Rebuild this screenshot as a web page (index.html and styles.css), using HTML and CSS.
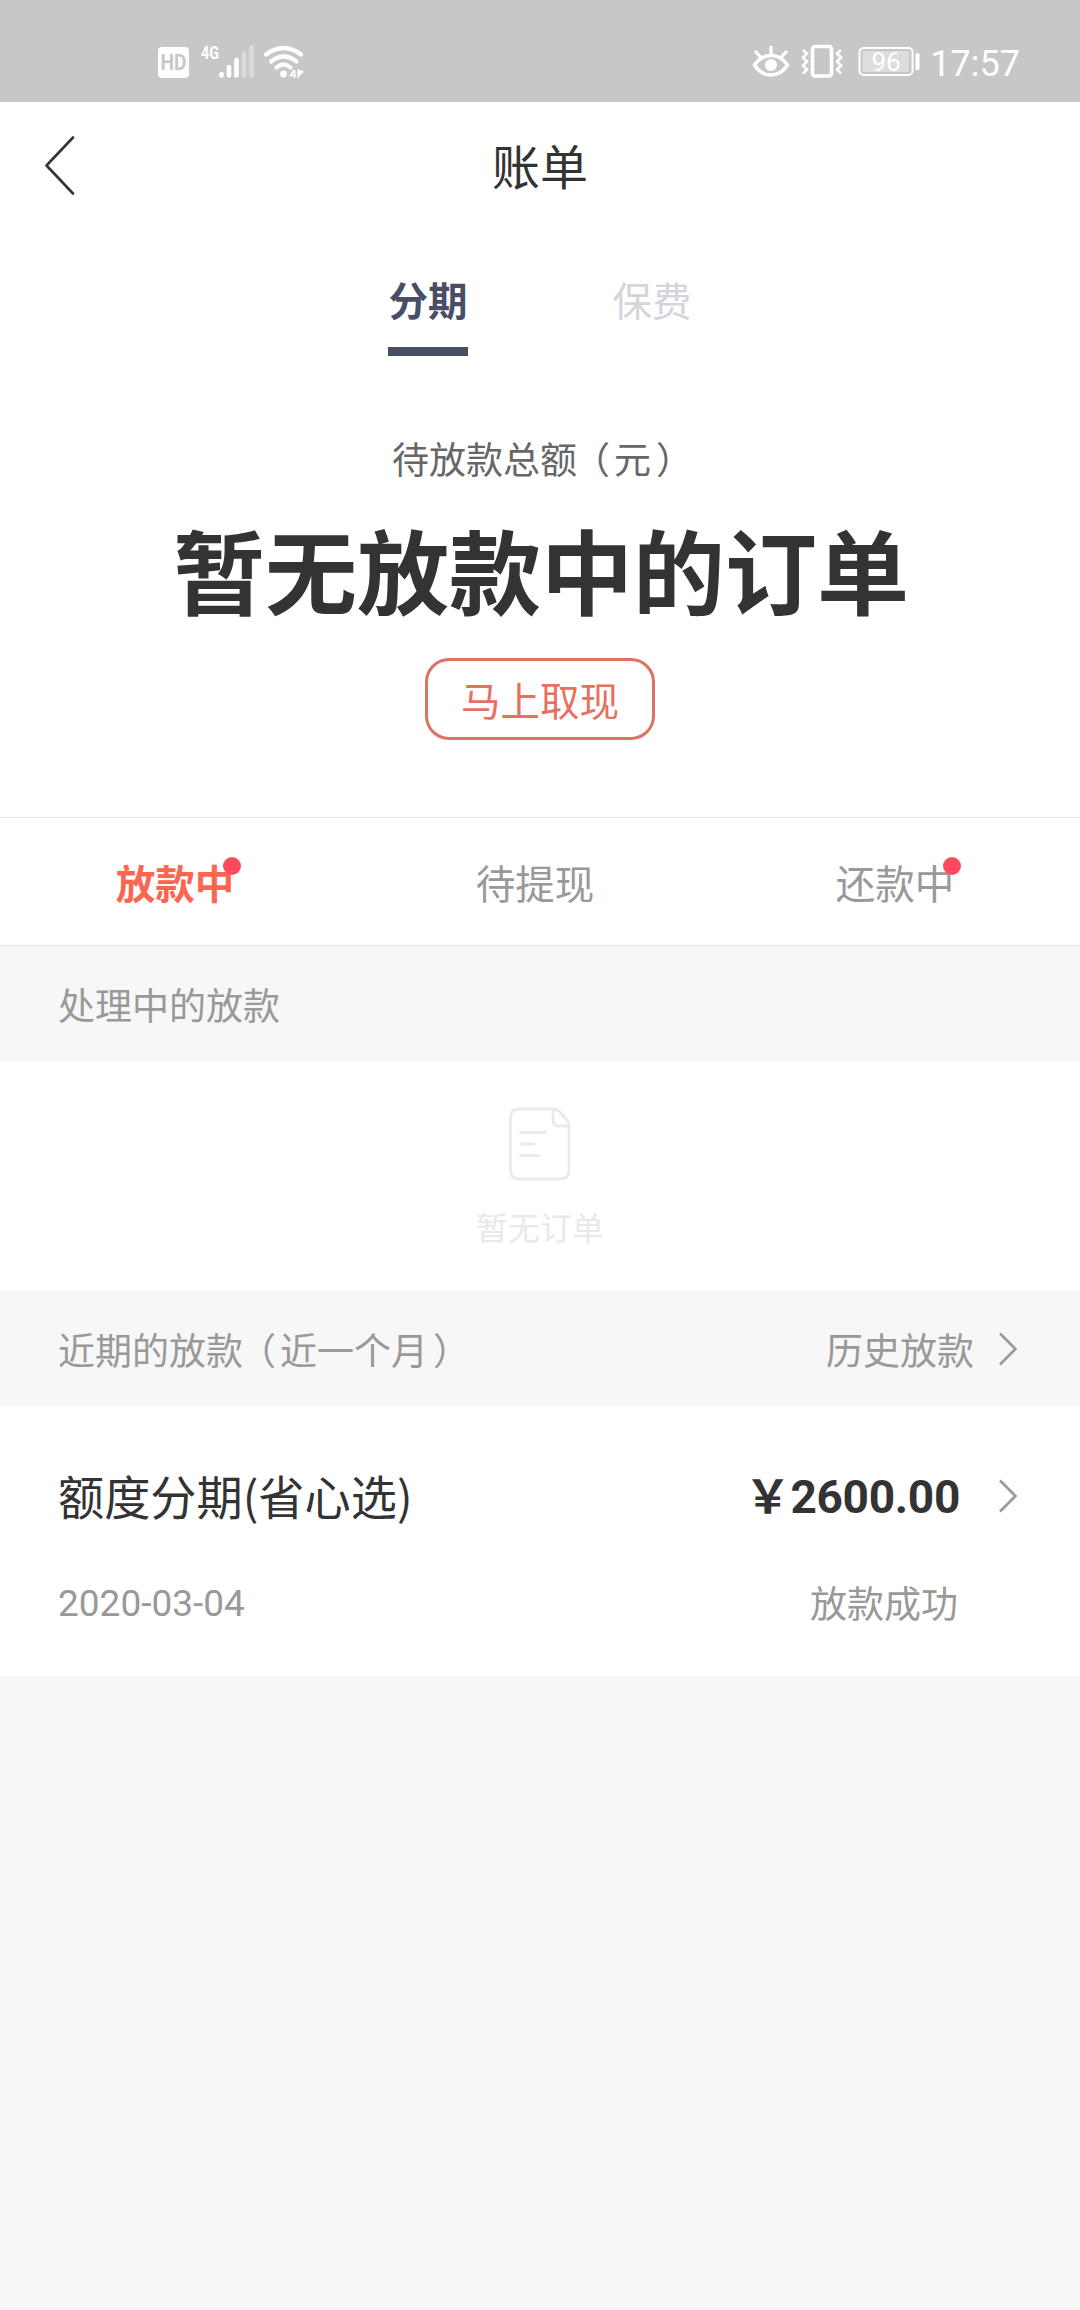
FILE: index.html
```html
<!DOCTYPE html>
<html lang="zh-CN">
<head>
<meta charset="utf-8">
<title>账单</title>
<link rel="stylesheet" href="styles.css">
</head>
<body>
<div class="status">
  <svg class="status-left" width="160" height="50" viewBox="150 36 160 50" fill="none" stroke="#fff">
    <rect x="158" y="47" width="31" height="31" rx="4" fill="#fff" stroke="none"/>
    <text class="hd" x="173.5" y="70" text-anchor="middle" textLength="26" lengthAdjust="spacingAndGlyphs">HD</text>
    <text class="net" x="201" y="59" textLength="18" lengthAdjust="spacingAndGlyphs">4G</text>
    <g stroke-width="4.6" stroke-linecap="round">
      <path d="M221.500 74v1.500M229 67v8.500M236.500 60v15.500"/>
      <path d="M244 53v22.500M251.500 47v28.500" opacity=".35"/>
    </g>
    <g stroke-width="4.200" stroke-linecap="round">
      <path d="M266 54.500Q283.500 41.500 301 54.500"/>
      <path d="M271 61.500Q283.500 51.500 296.500 61.500"/>
      <path d="M276.500 67.500Q283.500 61.500 290.500 67.500"/>
    </g>
    <circle cx="283.500" cy="74" r="3.400" fill="#fff" stroke="none"/>
    <path d="M294.500 70v8M294 70l-3.500 5.500h5.500" stroke-width="1.700"/>
    <path d="M298 69.500v9M298.500 70l4.500 2-4.500 4z" stroke-width="1.200" fill="#fff"/>
  </svg>
  <div class="status-right">
    <svg width="170" height="50" viewBox="752 36 170 50" fill="none" stroke="#fff">
      <path d="M755.500 65Q762 55.500 772 55.500T788.500 65Q782 75 772 75T755.500 65Z" stroke-width="3.600"/>
      <circle cx="772" cy="65" r="6" fill="#fff" stroke="none"/>
      <path d="M772 47.500v6M757 52l4.500 5M787 52l-4.500 5" stroke-width="3.300" stroke-linecap="round"/>
      <rect x="813.500" y="46.500" width="19" height="29.500" rx="2.500" stroke-width="3.600"/>
      <path d="M804 50l4 3.500-4 4 4 4-4 4 4 4-4 4M842 50l-4 3.500 4 4-4 4 4 4-4 4 4 4" stroke-width="2.600"/>
      <rect x="860.500" y="48" width="53" height="27" rx="4" stroke-width="2"/>
      <rect x="863.500" y="51" width="46.500" height="21" fill="#fff" opacity=".4" stroke="none"/>
      <text class="charge" x="887" y="71" text-anchor="middle">96</text>
      <rect x="916.500" y="53" width="4" height="17" rx="1.500" fill="#fff" stroke="none"/>
    </svg>
    <span class="clock">17:57</span>
  </div>
</div>

<header class="nav">
  <svg class="back" width="32" height="60" viewBox="0 0 32 60" fill="none" stroke="#333" stroke-width="2.600" stroke-linecap="round" stroke-linejoin="round"><path d="M29 2.500L2.500 30.500 29 58.500"/></svg>
  <h1 class="title">账单</h1>
</header>

<nav class="kinds">
  <a class="kind kind-on">分期</a>
  <a class="kind">保费</a>
</nav>

<section class="summary">
  <p class="caption">待放款总额<span class="open">（</span>元<span class="close">）</span></p>
  <p class="headline">暂无放款中的订单</p>
  <button class="cash">马上取现</button>
</section>

<nav class="tabs">
  <a class="tab tab-on"><span class="tab-label">放款中<i class="dot"></i></span></a>
  <a class="tab"><span class="tab-label">待提现</span></a>
  <a class="tab"><span class="tab-label">还款中<i class="dot"></i></span></a>
</nav>

<div class="section">处理中的放款</div>
<div class="empty">
  <svg width="62" height="74" viewBox="0 0 62 74" fill="none" stroke="#ebebeb" stroke-width="2.800" stroke-linejoin="round"><path d="M9 2H44Q48 2 51 5L57 12Q60 15 60 19V63Q60 72 51 72H10Q1.500 72 1.500 63V10.500Q1.500 2 9 2Z"/><path d="M44 2.500V13Q44 19 50 19H59M10.500 25.500H38M10.500 37H26M10.500 48.500H30.500"/></svg>
  <p class="empty-text">暂无订单</p>
</div>
<div class="section">
  <span>近期的放款<span class="open">（</span>近一个月<span class="close">）</span></span>
  <a class="history">历史放款<svg class="arrow" width="20" height="36" viewBox="0 0 20 36"><path d="M2 2.500L17.500 18 2 33.500"/></svg></a>
</div>
<div class="loan">
  <div class="row">
    <span class="name">额度分期(省心选)</span>
    <span class="amount">￥2600.00</span>
    <svg class="arrow" width="20" height="36" viewBox="0 0 20 36"><path d="M2 2.500L17.500 18 2 33.500"/></svg>
  </div>
  <div class="row row-sub">
    <span class="date">2020-03-04</span>
    <span class="state">放款成功</span>
  </div>
</div>
</body>
</html>
```

FILE: styles.css
```css
* { box-sizing: border-box; margin: 0; padding: 0; }
body {
  background: #f7f7f7;
  color: #333;
  font-family: "Noto Sans CJK SC", sans-serif;
  height: 2310px;
  overflow: hidden;
  white-space: nowrap;
}
svg { display: block; flex: none; }

.status {
  height: 102px;
  background: #c7c7c7;
  display: flex;
  justify-content: space-between;
  padding: 36px 60px 0 150px;
  font-family: Roboto, sans-serif;
  color: #fff;
}
.status-right { display: flex; gap: 9px; }
.hd { font: 700 22px Roboto, sans-serif; fill: #c7c7c7; stroke: none; }
.net { font: 700 19px Roboto, sans-serif; fill: #fff; stroke: none; }
.charge { font: 400 26px Roboto, sans-serif; fill: #fff; stroke: none; }
.clock { font-size: 36px; line-height: 56px; }

.nav {
  height: 128px;
  background: #fff;
  display: grid;
  grid-template-columns: 100px 1fr 100px;
  align-items: center;
  padding-bottom: 3px;
}
.back { margin-left: 44px; }
.title { font-size: 48px; font-weight: 400; text-align: center; line-height: 60px; padding-bottom: 2px; }

.kinds {
  height: 126px;
  background: #fff;
  display: flex;
  justify-content: center;
  align-items: flex-start;
  gap: 144px;
}
.kind {
  width: 80px;
  padding-top: 39px;
  font-size: 39.500px;
  line-height: 60px;
  text-align: center;
  color: #d2d5dc;
}
.kind-on {
  height: 126px;
  border-bottom: 9px solid #474e66;
  color: #474e66;
  font-weight: 700;
}

.summary {
  height: 461px;
  background: #fff;
  padding-top: 72px;
  display: flex;
  flex-direction: column;
  align-items: center;
}
.caption { font-size: 37px; line-height: 60px; color: #666; }
.open { margin: 0 4px 0 -4px; }
.close { margin: 0 -5px 0 5px; }
.headline { font-size: 92px; line-height: 120px; font-weight: 700; margin: 20px 0 0 2px; }
.cash {
  width: 230px;
  height: 82px;
  margin-top: 30px;
  border: 3px solid #df7363;
  border-radius: 24px;
  background: #fff;
  color: #e87060;
  font: 39.500px/76px "Noto Sans CJK SC", sans-serif;
}

.tabs {
  height: 129px;
  background: #fff;
  border-top: 1px solid #e8e8e8;
  border-bottom: 1px solid #e2e2e2;
  display: grid;
  grid-template-columns: repeat(3, 1fr);
}
.tab {
  padding-right: 10px;
  text-align: center;
  font-size: 39.500px;
  line-height: 127px;
  color: #999;
}
.tab-on { color: #fb6650; font-weight: 700; }
.tab-label { position: relative; display: inline-block; }
.dot {
  position: absolute;
  top: 39px;
  right: -7px;
  width: 18px;
  height: 18px;
  border-radius: 50%;
  background: #ff4b5d;
}

.section {
  height: 115px;
  padding: 0 62px 0 58px;
  display: flex;
  justify-content: space-between;
  align-items: center;
  font-size: 37px;
  line-height: 60px;
  color: #999;
}
.history { display: flex; align-items: center; gap: 24px; }
.arrow { fill: none; stroke: #999; stroke-width: 2.600; }

.empty {
  height: 230px;
  background: #fff;
  padding-top: 46px;
  display: flex;
  flex-direction: column;
  align-items: center;
}
.empty-text { margin-top: 25px; font-size: 32px; line-height: 40px; color: #e9e9e9; }

.loan { height: 270px; background: #fff; padding: 60px 62px 0 58px; }
.row { display: flex; align-items: center; height: 60px; }
.name { flex: 1; font-size: 46.200px; line-height: 60px; padding-bottom: 3px; }
.amount { font: 700 46px/60px Roboto, "Noto Sans CJK SC", sans-serif; letter-spacing: -.3px; margin-right: 38px; padding-top: 2px; }
.row-sub { justify-content: space-between; margin-top: 46px; padding-right: 60px; font-size: 37px; line-height: 60px; color: #999; }
.date { font-family: Roboto, sans-serif; padding-top: 3px; }
```
